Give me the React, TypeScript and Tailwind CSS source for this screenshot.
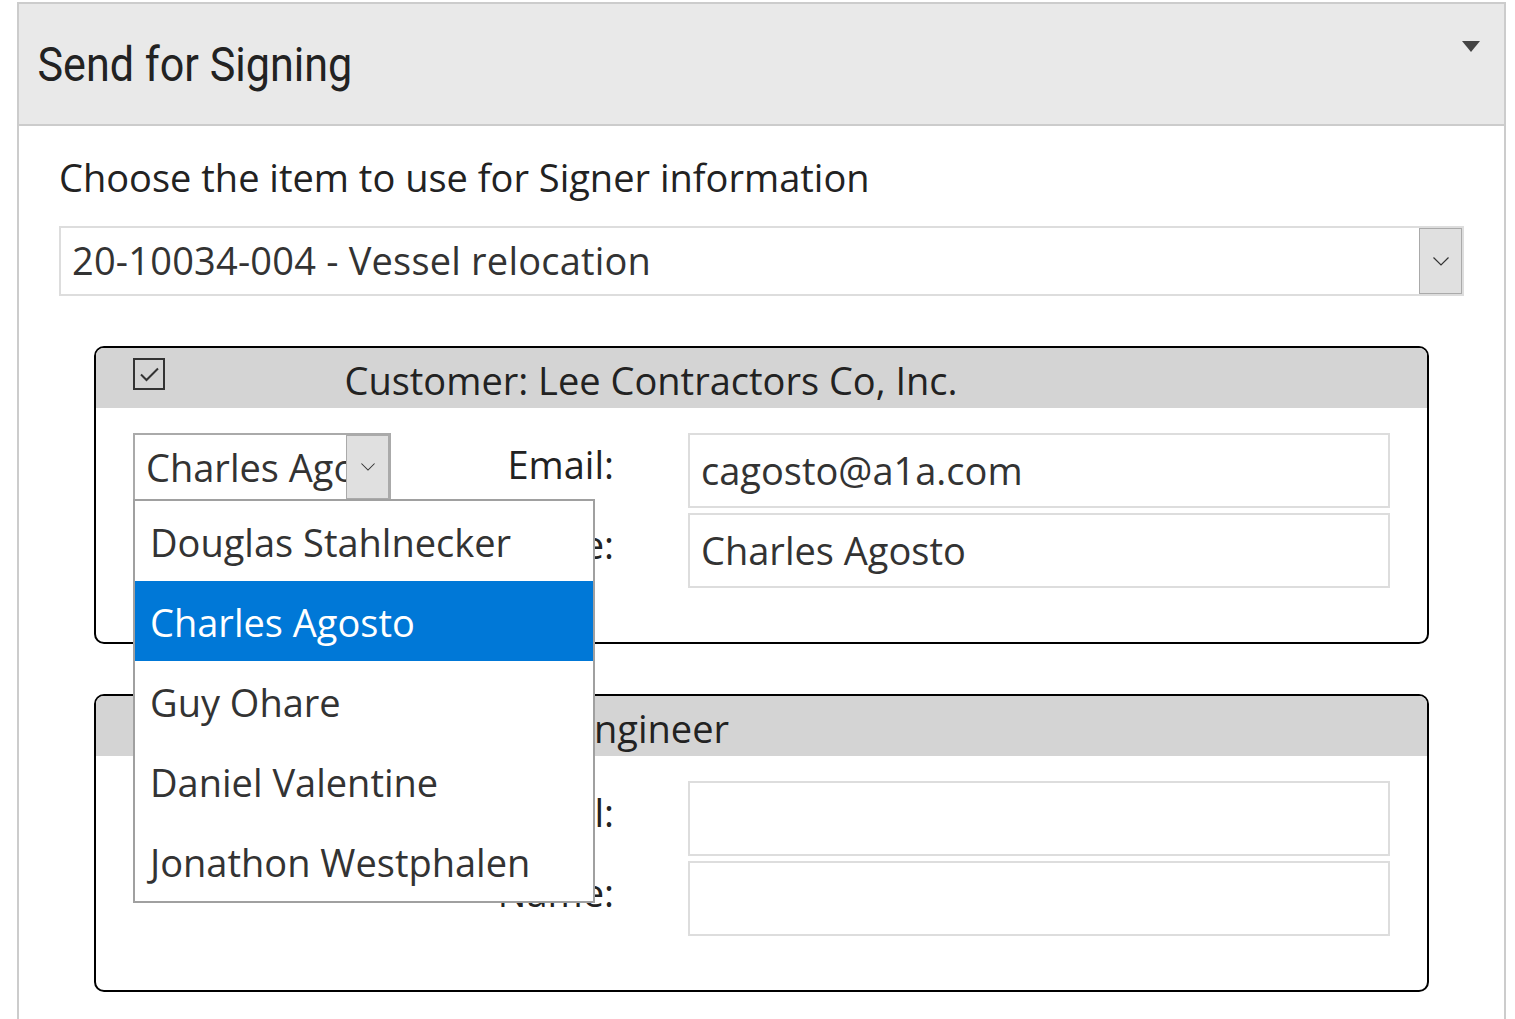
import React from 'react';

const font = "font-['Segoe_UI','Open_Sans',sans-serif]";

const Chevron: React.FC<{ w?: number }> = ({ w = 16 }) => (
  <svg width={w} height={w / 2 + 1} viewBox="0 0 16 9" fill="none">
    <path d="M0.5 0.5 L8 8 L15.5 0.5" stroke="#333" strokeWidth="1.2" />
  </svg>
);

const CheckBox: React.FC = () => (
  <div className="w-[32px] h-[32px] border-2 border-[#333] bg-transparent flex items-center justify-center shrink-0">
    <svg width="22" height="16" viewBox="0 0 22 16" fill="none">
      <path d="M3 8.5 L8.5 14 L20 2.5" stroke="#333" strokeWidth="2" />
    </svg>
  </div>
);

const people = ['Douglas Stahlnecker', 'Charles Agosto', 'Guy Ohare', 'Daniel Valentine', 'Jonathon Westphalen'];

const SignerBox: React.FC<{
  title: string;
  email?: string;
  name?: string;
  selected?: string;
  open?: boolean;
}> = ({ title, email = '', name = '', selected = '', open }) => (
  <div className="border-2 border-black rounded-[10px] bg-white">
    <div className="h-[60px] bg-[#d4d4d4] rounded-t-[8px] flex items-center">
      <div className="ml-[37px] mb-[8px]">
        <CheckBox />
      </div>
      <div className="w-[972px] text-center text-[38px] text-[#222] leading-none pt-[3px]">{title}</div>
    </div>
    <div className="flex pt-[25px] pb-[54px] pl-[37px] pr-[37px]">
      <div className="relative w-[258px] shrink-0">
        <div className="h-[68px] border-2 border-[#aaaaaa] flex bg-white">
          <div className="flex-1 overflow-hidden whitespace-nowrap pl-[11px] text-[38px] text-[#333] leading-[64px]">{selected}</div>
          <div className="w-[43px] bg-[#e0e0e0] border border-[#aaaaaa] flex items-center justify-center">
            <Chevron w={14} />
          </div>
        </div>
        {open && (
          <div className="absolute z-10 left-0 top-[66px] w-[462px] border-2 border-[#a0a0a0] bg-white">
            {people.map(p => (
              <div
                key={p}
                className={`h-[80px] flex items-center pl-[15px] pt-[2px] text-[38px] whitespace-nowrap ${
                  p === selected ? 'bg-[#0078d7] text-white' : 'text-[#333]'
                }`}
              >
                {p}
              </div>
            ))}
          </div>
        )}
      </div>
      <div className="w-[223px] shrink-0 flex flex-col gap-[5px] text-[38px] text-[#222] text-right">
        <div className="h-[75px] flex items-center justify-end pb-[12px]">Email:</div>
        <div className="h-[75px] flex items-center justify-end pb-[12px]">Name:</div>
      </div>
      <div className="ml-[74px] flex-1 flex flex-col gap-[5px]">
        <div className="h-[75px] border-2 border-[#dddddd] flex items-center pl-[11px] text-[38px] text-[#333]">{email}</div>
        <div className="h-[75px] border-2 border-[#dddddd] flex items-center pl-[11px] text-[38px] text-[#333]">{name}</div>
      </div>
    </div>
  </div>
);

export default function App() {
  return (
    <div className={`min-h-screen bg-white pt-[2px] pl-[17px] ${font}`}>
      <div className="w-[1489px] h-[1017px] border-2 border-b-0 border-[#cccccc] overflow-hidden">
        {/* header */}
        <div className="h-[122px] bg-[#e9e9e9] border-b-2 border-[#cccccc] flex justify-between">
          <div className="font-['Roboto',sans-serif] text-[49px] text-[#222] pl-[21px] pt-[36px] leading-none origin-left scale-x-[0.88] whitespace-nowrap">
            Send for Signing
          </div>
          <div className="pt-[37px] pr-[24px]">
            <svg width="18" height="11" viewBox="0 0 18 11">
              <path d="M0 0 H18 L9 11 Z" fill="#444" />
            </svg>
          </div>
        </div>

        {/* body */}
        <div className="pl-[40px] pr-[40px]">
          <div className="pt-[27px] text-[38px] text-[#222] leading-[48px]">Choose the item to use for Signer information</div>
          <div className="mt-[25px] h-[70px] border-2 border-[#dddddd] flex">
            <div className="flex-1 pl-[11px] text-[38px] text-[#333] leading-[64px] tracking-[0.2px]">20-10034-004 - Vessel relocation</div>
            <div className="w-[43px] bg-[#e0e0e0] border border-[#aaaaaa] flex items-center justify-center">
              <Chevron />
            </div>
          </div>

          <div className="pl-[35px] pr-[35px] mt-[50px] flex flex-col gap-[50px]">
            <SignerBox
              title="Customer: Lee Contractors Co, Inc."
              email="cagosto@a1a.com"
              name="Charles Agosto"
              selected="Charles Agosto"
              open
            />
            <SignerBox title="Engineer" />
          </div>
        </div>
      </div>
    </div>
  );
}
